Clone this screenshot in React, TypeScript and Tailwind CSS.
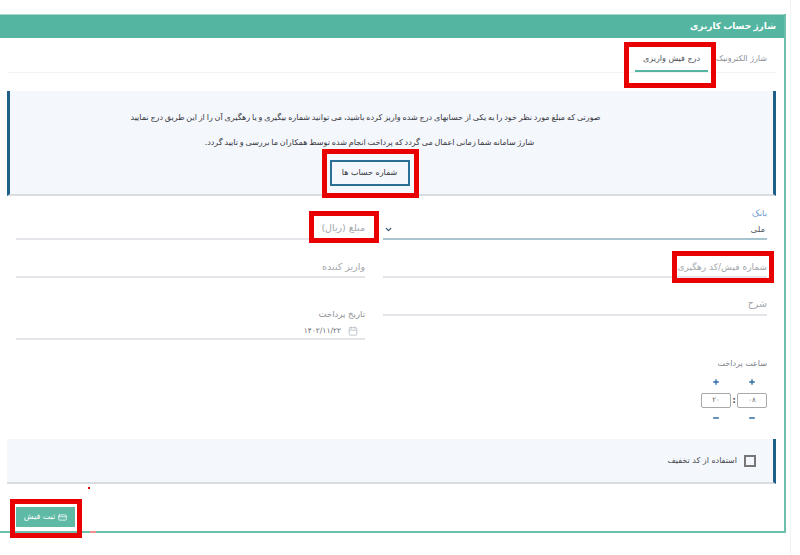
import { CreditCard, ChevronDown, Calendar, Plus, Minus } from "lucide-react";

const font = "font-['DejaVu_Sans',sans-serif]";

// the red marks drawn over the screenshot
const RedBox = ({ className }: { className: string }) => (
  <span className={`absolute border-[5px] border-[#e90000] pointer-events-none ${className}`} />
);

const Line = ({ className = "border-[#e3e5ea]" }: { className?: string }) => (
  <div className={`border-b-2 ${className}`} />
);

const App = () => {
  return (
    <div dir="rtl" className={`w-[800px] h-[555px] overflow-hidden bg-white pt-[14px] relative ${font}`}>
      <div className="w-[786px] h-[519px] mr-[14px] border-r-2 border-b-2 border-[#6cc0ac] relative">
        <div className="h-[24px] bg-[#54b5a0] text-white text-[9px] font-bold flex items-center pr-[8px] border-t border-[#a9d8cc] [word-spacing:-1px]">
          شارژ حساب کاربری
        </div>

        <div className="mx-[8px] pr-[9px] h-[35px] border-b border-[#f1f2f4] flex text-[8px] text-[#8b8e94]">
          <div className="w-[52px] pt-[15px] whitespace-nowrap">شارژ الکترونیک</div>
          <div className="relative w-[73px] mr-[7px] h-[34px] border-b-2 border-[#54b5a0] pt-[15px] text-center text-[#4b4e55] whitespace-nowrap">
            درج فیش واریزی
            <RedBox className="top-[4px] -left-[11px] -right-[8px] -bottom-[18px]" />
          </div>
        </div>

        <div className="mt-[18px] mr-[8px] ml-[7px] h-[105px] bg-[#f4f7fc] border-x-[3px] border-[#1f6089] border-b-2 border-b-[#d9dce0] pr-[44px] pt-[21px] flex flex-col items-center text-[8px] [word-spacing:-0.7px] text-[#33363b]">
          <p className="h-[25px] pr-[8px] whitespace-nowrap">
            صورتی که مبلغ مورد نظر خود را به یکی از حسابهای درج شده واریز کرده باشید، می توانید شماره بیگیری و یا رهگیری آن را از این طریق درج نمایید
          </p>
          <p className="h-[23px] whitespace-nowrap">
            شارژ سامانه شما زمانی اعمال می گردد که پرداخت انجام شده توسط همکاران ما بررسی و تایید گردد.
          </p>
          <div className="relative">
            <button type="button" className="w-[80px] h-[26px] border-2 border-[#2b6f94] text-[8px] text-[#33363b]">
              شماره حساب ها
            </button>
            <RedBox className="-top-[11px] -left-[8px] -right-[9px] -bottom-[12px]" />
          </div>
        </div>

        <div className="flex pr-[17px] pl-[16px] text-[9.5px] text-[#a3a6ab]">
          <div className="w-[384px]">
            <div className="pt-[11px] text-[#6d95cf] text-[8.5px] h-[25px]">بانک</div>
            <div className="h-[17px] flex justify-between items-center text-[#55585e] text-[8.5px] pr-[2px]">
              ملی
              <ChevronDown size={9} strokeWidth={3} className="ml-[1px] text-[#2c4a66]" />
            </div>
            <Line className="border-[#a8c4d0]" />

            <div className="relative mt-[20px] h-[16px] pt-[1px] whitespace-nowrap text-[9px]">
              شماره فیش/کد رهگیری
              <RedBox className="-top-[9px] -right-[7px] left-[289px] -bottom-[7px]" />
            </div>
            <Line />

            <div className="mt-[19px] h-[17px]">شرح</div>
            <Line />

            <div className="mt-[42px] text-[8px] text-[#7d8086] h-[17px]">ساعت پرداخت</div>
            <div className="w-[66px] text-[#2e6da4]">
              <div className="flex justify-between px-[11px] h-[14px] items-center">
                <Plus size={8} strokeWidth={4} />
                <Plus size={8} strokeWidth={4} />
              </div>
              <div className="flex items-center justify-between mt-[4px] text-[7px] text-[#666]">
                <div className="w-[30px] h-[15px] border border-[#a9a9a9] rounded-[2px] text-center leading-[13px]">۰۸</div>
                <span className="font-bold text-[#444] text-[8px]">:</span>
                <div className="w-[30px] h-[15px] border border-[#a9a9a9] rounded-[2px] text-center leading-[13px]">۲۰</div>
              </div>
              <div className="flex justify-between px-[11px] h-[14px] mt-[3px] items-center">
                <Minus size={8} strokeWidth={4} />
                <Minus size={8} strokeWidth={4} />
              </div>
            </div>
          </div>

          <div className="w-[349px] mr-[18px]">
            <div className="h-[42px] pt-[25px] whitespace-nowrap">
              <span className="relative inline-block">
                مبلغ (ریال)
                <RedBox className="-top-[10px] -right-[14px] -left-[12px] -bottom-[8px]" />
              </span>
            </div>
            <Line />
            <div className="mt-[20px] h-[16px]">واریز کننده</div>
            <Line />
            <div className="mt-[30px] h-[15px] text-[8.5px] text-[#8b8e94]">تاریخ پرداخت</div>
            <div className="h-[15px] flex items-center text-[7.5px] text-[#6b6e74] pr-[7px]">
              <Calendar size={10} className="text-[#b6bcc8]" />
              <span className="mr-[7px]">۱۴۰۲/۱۱/۲۲</span>
            </div>
            <Line />
          </div>
        </div>

        <div className="mt-[14px] mr-[8px] ml-[7px] h-[45px] bg-[#f4f7fc] border-r-[3px] border-[#1f6089] border-b-2 border-b-[#d9dce0] flex items-center pr-[17px] text-[8px] text-[#44474d]">
          <span className="w-[12px] h-[12px] border-2 border-[#777] ml-[7px]" />
          استفاده از کد تخفیف
        </div>

        <div className="mt-[3px] h-[3px] relative">
          <span className="absolute left-[88px] top-0 w-[2px] h-[2px] bg-[#e90000]" />
        </div>

        <div className="mt-[17px] mr-[709px] w-[59px] relative">
          <button type="button" className="w-[59px] h-[20px] bg-[#5fbaa5] text-white text-[8px] flex items-center justify-center gap-[3px]">
            <CreditCard size={9} />
            ثبت فیش
          </button>
          <RedBox className="-top-[8px] -left-[6px] -right-[7px] -bottom-[11px]" />
        </div>
        <span className="absolute left-[90px] -bottom-[2px] w-[6px] h-[2px] bg-[#f0908f]" />
      </div>
      <div className="absolute top-0 bottom-0 left-[790px] w-px bg-[#f0f0f2]" />
    </div>
  );
};

export default App;
